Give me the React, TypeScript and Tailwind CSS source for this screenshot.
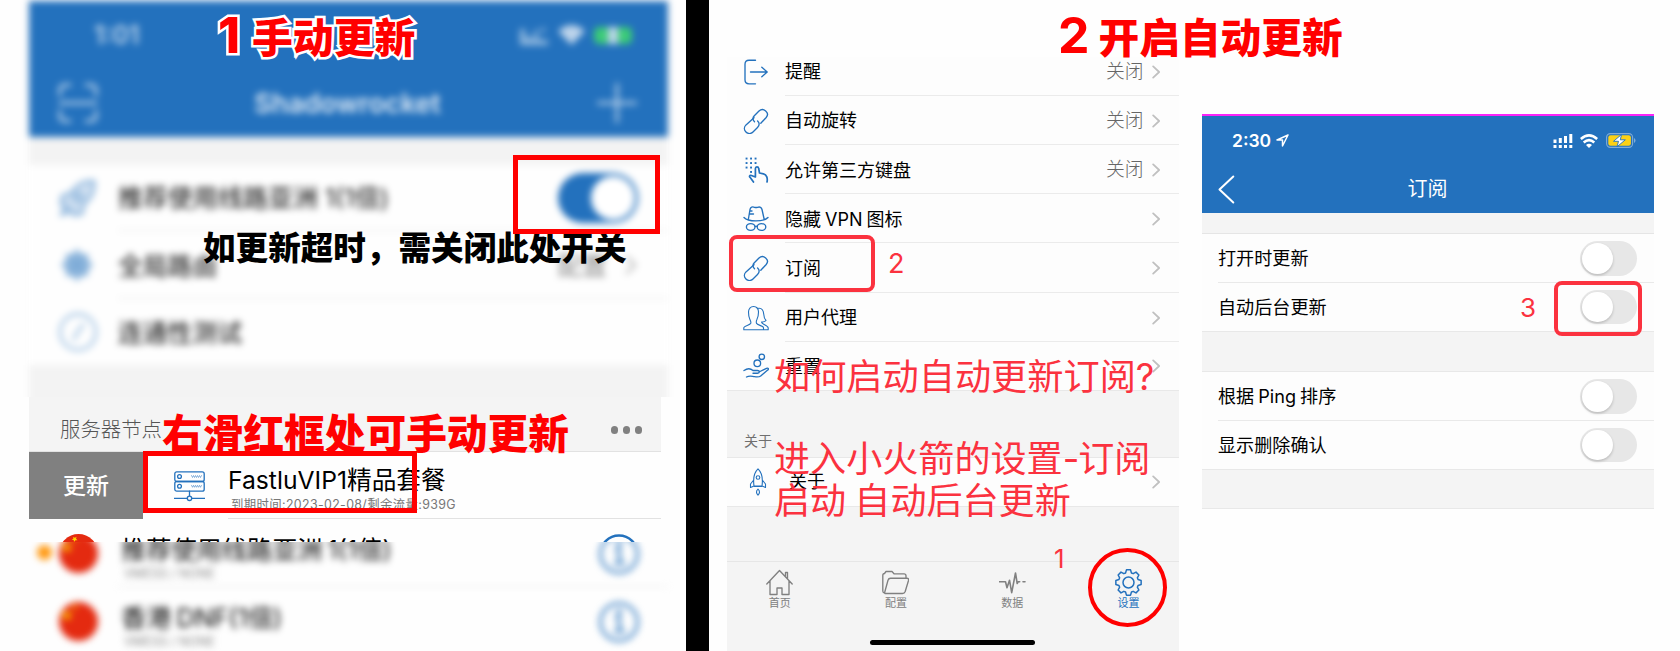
import React from "react";

const FONT = "font-['Inter','Noto_Sans_CJK_SC',sans-serif]";
const HEAVY = "font-['Noto_Sans_CJK_SC',sans-serif] font-black";

type IconProps = { className?: string; children: React.ReactNode; box?: string; sw?: number };
function Icon({ className = "", children, box = "0 0 26 26", sw = 1.35 }: IconProps) {
  return (
    <svg className={`block shrink-0 ${className}`} viewBox={box} fill="none" stroke="currentColor" strokeWidth={sw} strokeLinecap="round" strokeLinejoin="round">
      {children}
    </svg>
  );
}

function Chevron({ className = "" }: { className?: string }) {
  return (
    <Icon className={className} box="0 0 9 15" sw={1.9}>
      <path d="M1.2 1.5 7.6 7.5 1.2 13.5" />
    </Icon>
  );
}

const LogoutIcon = () => (
  <Icon className="size-[26px]">
    <path d="M12.500 1.200H6Q2 1.200 2 5.200V20.800Q2 24.800 6 24.800H12.500M7.500 13H24M18.800 8.200 24.200 13l-5.400 4.800" />
  </Icon>
);
const LinkIcon = () => (
  <Icon className="size-[26px]">
    <path d="M11.500 13.800c-2-1.900-2-4.200-.2-6l4.700-4.700c4.200-4.300 11.200 1.600 7.200 6.400l-5.400 5.700" />
    <path d="M11 9.800 3 16.900c-4.800 5 2.300 11.600 7 7.100l4.500-4.500c2.200-2.200 2.200-4.700.1-6.600" />
  </Icon>
);
const KeypadIcon = () => (
  <Icon className="size-[26px]">
    <g fill="currentColor" stroke="none">
      {[3.5, 8, 12.5].map((x) =>
        [1.5, 6, 10.5].map((y) => (x === 12.5 && y === 10.5 ? null : <rect key={`${x}-${y}`} x={x - 0.9} y={y - 0.9} width="1.9" height="1.9" />)),
      )}
      <rect x="7.100" y="14" width="1.900" height="1.900" />
    </g>
    <path strokeWidth="1.700" d="M24 25c.8-3.500-.2-7.500-3.500-8.200l-4-.8-.8-4.500c-.3-2.200-3.300-2.200-3.300 0V20l-4-1.500c-2-.3-2.500 1-1 2.200L10.500 25" />
  </Icon>
);
const SpyIcon = () => (
  <Icon className="size-[26px]">
    <path d="M5.500 12.500 7 3.500c.5-2.500 2.500-3 4.500-2.200 1 .3 2 .3 3 0 2.500-.8 4 0 4.500 2.200l2 9M1 11.500c4 4.500 20 4.500 24 0M6.500 8h4M7 5h2M12.200 20.500q1-.8 1.800 0" />
    <ellipse cx="7.700" cy="21" rx="4.300" ry="3.400" />
    <ellipse cx="18.500" cy="21" rx="4.300" ry="3.400" />
  </Icon>
);
const UsersIcon = () => (
  <Icon className="size-[26px]" sw={1.1}>
    <path d="M.8 24.800v-2c0-2 6.200-2.500 7-4.500.4-1.500-.3-2.500-1-4-.9-2-1.300-4-1.300-7.300 0-3.300 2-5.500 5-5.500s5 2.200 5 5.500c0 3.300-.6 5.500-1.500 7.300-.8 1.500-1 2.500-.5 4 .8 2 7 2.300 7 4.500v2zM15.500 3.300c3.500-.5 5 2.500 5.200 5.700.2 3 .8 5 2.300 6.500-1 1.500-3 1.500-4.500 1.500 0 2.500 6.700 3 6.700 6v1.800h-4.500" />
  </Icon>
);
const HandIcon = () => (
  <Icon className="size-[26px]">
    <circle cx="18.800" cy="3.800" r="2.700" />
    <circle cx="14.300" cy="10.300" r="3.300" />
    <path d="M1 17.500c4-2.800 7-1.800 9 0h4.500c2.500 0 2.500 2.700 0 2.700H10M17 18.500l6.500-3.200c2-.6 2.500.8 1.200 1.800l-7 5.800c-1.500 1.200-4 1.100-6 .8-3-.4-5-1.500-8.200.3" />
  </Icon>
);
const AboutIcon = () => (
  <Icon className="h-[28px] w-[18px]" box="0 0 18 28" sw={1.1}>
    <path d="M9 .8C4.500 5 4 11 5 18h8c1-7 .5-13-4-17.200zM4.700 12 1.500 16v3.500L5 18M13.300 12l3.200 4v3.500L13 18M5.500 18.500h7" />
    <circle cx="9" cy="9.500" r="1.800" />
    <path d="M9 21.200c-2.400 2.200-1.600 4.300 0 6 1.600-1.700 2.400-3.800 0-6z" />
  </Icon>
);

/* ---------- left phone ---------- */

function HomeTop() {
  return (
    <div className="flex flex-col bg-[#fefefe]">
      <header className="flex h-[136px] flex-col bg-[#2371bd] text-white">
        <div className="flex h-[68px] items-center justify-between pl-[65px] pr-[36px] opacity-70">
          <span className="pt-[2px] text-[25px] font-semibold">1:01</span>
          <div className="flex items-center gap-[9px]">
            <svg className="h-[19px] w-[30px]" viewBox="0 0 30 19" fill="white" opacity=".75">
              <path d="M1 3h5v11H1zM8 10h4v4H8zM15 8h4v6h-4zM22 2h4v4h-4zM15 4h4v3h-4zM1 14h28v5H1z" />
            </svg>
            <svg className="h-[20px] w-[27px]" viewBox="0 0 27 20" fill="white">
              <path d="M0 6Q13.500-6 27 6L13.500 20z" />
            </svg>
            <span className="flex h-[17px] w-[38px] justify-center rounded-[5px] bg-[#46f25c]">
              <span className="h-full w-[10px] bg-white" />
            </span>
          </div>
        </div>
        <div className="flex h-[68px] items-center justify-between pl-[29px] pr-[31px]">
          <Icon className="size-[40px] opacity-70" box="0 0 40 40" sw={3}>
            <path d="M2 12V7q0-5 5-5h5M28 2h5q5 0 5 5v5M38 28v5q0 5-5 5h-5M12 38H7q-5 0-5-5v-5M2 20h36" />
          </Icon>
          <span className="text-[26.800px] font-semibold opacity-85">Shadowrocket</span>
          <Icon className="size-[40px] opacity-80" box="0 0 40 40" sw={2.5}>
            <path d="M20 1v38M1 20h38" />
          </Icon>
        </div>
      </header>
      <div className="h-[28px] bg-[#f3f3f3]" />
      <div className="flex h-[65px] items-center pl-[29px] pr-[30px] text-[25px]">
        <Icon className="size-[38px] text-[#2371bd] opacity-60" box="0 0 38 38" sw={2.5}>
          <path fill="currentColor" fillOpacity=".35" d="M36 2c-12 0-18 4-23 12l-9 3-1 9 6 1-6 9 11-5 1 5 9-1 2-10C34 19 37 12 36 2z" />
          <circle cx="20" cy="18" r="4" />
        </Icon>
        <span className="ml-[22px] mt-[3px] grow font-medium text-[#333]">推荐使用线路亚洲 1(1倍)</span>
        <span className="flex h-[50px] w-[80px] items-center justify-end rounded-full bg-[#2371bd] pr-[3px]">
          <span className="size-[44px] rounded-full bg-white" />
        </span>
      </div>
      <div className="ml-[89px] h-px bg-[#e4e4e4]" />
      <div className="flex h-[67px] items-center pl-[29px] pr-[31px] text-[24.800px]">
        <Icon className="size-[38px] text-[#2371bd] opacity-60" box="0 0 38 38" sw={2.5}>
          <circle cx="19" cy="19" r="13" fill="currentColor" stroke="none" opacity=".8" />
          <path d="M19 4v30M4 19h30M9 9l20 20M29 9 9 29" />
        </Icon>
        <span className="ml-[22px] mt-[4px] grow font-medium text-[#333]">全局路由</span>
        <span className="mr-[18px] mt-[4px] text-[#888]">配置</span>
        <Chevron className="h-[20px] w-[12px] text-[#bbb]" />
      </div>
      <div className="ml-[89px] h-px bg-[#e4e4e4]" />
      <div className="flex h-[66px] items-center pl-[29px] text-[24.800px]">
        <Icon className="size-[40px] text-[#2371bd] opacity-45" box="0 0 38 38" sw={2.5}>
          <circle cx="19" cy="19" r="17" />
          <path d="M24 12l-6 8-3 6" />
        </Icon>
        <span className="ml-[20px] mt-[3px] font-medium text-[#333]">连通性测试</span>
      </div>
      <div className="h-[60px] bg-[#f3f3f3]" />
    </div>
  );
}

function NodeRow({ name, active }: { name: string; active?: boolean }) {
  return (
    <div className="flex h-[67px] items-center">
      <span className={`ml-[8px] size-[15px] rounded-full ${active ? "bg-[#ff9a14]" : ""}`} />
      <svg className="ml-[7px] mt-[2px] size-[39px]" viewBox="0 0 39 39">
        <circle cx="19.500" cy="19.500" r="19.500" fill="#e42a10" />
        <path fill="#ffd500" d="m8 8 1.500 3.500 4 .3-3 2.500 1 4L8 16l-3.500 2.200 1-4-3-2.500 4-.3zM14 3l2 .8 1.500-1-.5 2 1.500 1.400h-2L15 8l-.3-2-1.900-.6 1.700-.8z" />
      </svg>
      <div className="ml-[23px] flex grow flex-col pt-[11px]">
        <span className="text-[25.200px] leading-[30px] text-black [word-spacing:-2px]">{name}</span>
        <span className="ml-[3px] mt-[1px] text-[12.500px] leading-[16px] text-[#888]">VMESS / NONE</span>
      </div>
      <Icon className="mr-[29px] mt-[3px] size-[40px] text-[#2371bd]" box="0 0 40 40" sw={2.5}>
        <circle cx="20" cy="20" r="18.500" />
        <path d="M17 17h3.500v12M16 29h9" />
        <circle cx="20" cy="11" r="1.500" fill="currentColor" />
      </Icon>
    </div>
  );
}

function NodeList() {
  return (
    <div className="flex w-[639px] flex-col">
      <NodeRow name="推荐使用线路亚洲 1(1倍)" active />
      <div className="ml-[89px] h-px bg-[#e8e8e8]" />
      <NodeRow name="香港 DNF(1倍)" />
    </div>
  );
}

function LeftPhone() {
  return (
    <section className="relative flex w-[686px] shrink-0 flex-col bg-[#fefefe]">
      <div className="h-[397px] overflow-hidden">
        <div className="ml-[29px] w-[639px] pt-px blur-[3.500px]">
          <HomeTop />
        </div>
      </div>
      <div className="ml-[29px] flex h-[54px] w-[632px] items-center justify-between bg-[#f4f4f4] pl-[31px] pr-[19px] pt-[12px]">
        <span className="text-[20.400px] font-light text-[#555]">服务器节点</span>
        <div className="flex gap-[4.500px]">
          <span className="size-[7.500px] rounded-full bg-[#808080]" />
          <span className="size-[7.500px] rounded-full bg-[#808080]" />
          <span className="size-[7.500px] rounded-full bg-[#808080]" />
        </div>
      </div>
      <div className="ml-[29px] flex h-[68px] w-[632px] border-t border-[#e2e2e2]">
        <div className="flex w-[114px] items-center justify-center bg-[#808080] pt-[2px] text-[23px] font-medium text-white">更新</div>
        <Icon className="ml-[31px] mt-[19px] h-[31px] w-[31px] text-[#2371bd]" box="0 0 31 31" sw={1.3}>
          <rect x=".8" y=".8" width="29.400" height="9.700" rx="2" />
          <rect x=".8" y="10.500" width="29.400" height="9.700" rx="2" />
          <circle cx="5.500" cy="5.500" r="1.900" />
          <circle cx="5.500" cy="15.300" r="1.900" />
          <path d="M15.500 20.200v4.500M.5 27.300h13M17.800 27.300h12.700" />
          <circle cx="15.500" cy="27.300" r="2.200" />
          <path strokeWidth=".7" opacity=".7" d="m17.500 4.500 1 2 1-2 1 2 1-2 1 2 1-2 1 2 1-2 1 2 1-2M17.500 14.300l1 2 1-2 1 2 1-2 1 2 1-2 1 2 1-2 1 2 1-2" />
        </Icon>
        <div className="ml-[23px] flex grow flex-col border-b border-[#e2e2e2] pt-[12px]">
          <span className="whitespace-nowrap text-[24.700px] leading-[32px] text-black">FastluVIP1精品套餐</span>
          <span className="ml-[3px] mt-[1px] whitespace-nowrap text-[12.400px] leading-[16px] tracking-[0.36px] text-[#777]">到期时间:2023-02-08/剩余流量:939G</span>
        </div>
      </div>
      <div className="ml-[29px] h-[23px] overflow-hidden">
        <NodeList />
      </div>
      <div className="h-[109px] overflow-hidden pl-[29px]">
        <div className="-mt-[23px] blur-[3.500px]">
          <NodeList />
        </div>
      </div>

      <div className={`absolute left-[218px] top-[5px] flex items-baseline whitespace-nowrap leading-[60px] text-[#f00] [paint-order:stroke_fill] [-webkit-text-stroke:5px_white] ${HEAVY}`}>
        <span className="font-['Inter'] text-[50px] font-extrabold">1</span>
        <span className="ml-[12px] text-[40.800px]">手动更新</span>
      </div>
      <div className={`absolute left-[203px] top-[226px] whitespace-nowrap text-[32.600px] leading-[40px] text-black ${HEAVY}`}>如更新超时，需关闭此处开关</div>
      <div className={`absolute left-[162px] top-[407px] whitespace-nowrap text-[40.700px] leading-[50px] text-[#f00] ${HEAVY}`}>右滑红框处可手动更新</div>
      <div className="absolute left-[513px] top-[155px] h-[79px] w-[147px] border-[5px] border-[#f00]" />
      <div className="absolute left-[143px] top-[451px] h-[62px] w-[274px] border-[5px] border-[#f00]" />
    </section>
  );
}

/* ---------- settings phone ---------- */

function SettingRow({ icon, label, value, last }: { icon: React.ReactNode; label: string; value?: string; last?: boolean }) {
  return (
    <div className={`flex pl-[16px] ${last ? "h-[48.200px]" : "h-[49.200px]"}`}>
      <div className="flex w-[26px] items-center justify-center pt-[1px] text-[#2371bd]">{icon}</div>
      <div className={`ml-[16px] flex grow items-center border-b pr-[19px] pt-[2px] ${last ? "border-transparent" : "border-[#ebebeb]"}`}>
        <span className="grow whitespace-nowrap text-[18px] text-black [word-spacing:-1px]">{label}</span>
        {value && <span className="mr-[8px] pt-[1px] text-[18.800px] font-light text-[#666]">{value}</span>}
        <Chevron className="h-[14px] w-[8.500px] text-[#c0c0c0]" />
      </div>
    </div>
  );
}

function Tab({ icon, label, active }: { icon: React.ReactNode; label: string; active?: boolean }) {
  return (
    <div className={`flex w-[116.300px] flex-col items-center ${active ? "text-[#2371bd]" : "text-[#808080]"}`}>
      {icon}
      <span className="text-[11px] leading-[14px]">{label}</span>
    </div>
  );
}

const GEAR = (() => {
  const pts: string[] = [];
  const n = 8;
  for (let i = 0; i < n; i++) {
    const c = (i * 2 * Math.PI) / n;
    [[-0.3, 10], [-0.16, 12.8], [0.16, 12.8], [0.3, 10]].forEach(([a, r]) => {
      pts.push(`${(13.5 + r * Math.sin(c + a)).toFixed(2)} ${(13.5 - r * Math.cos(c + a)).toFixed(2)}`);
    });
  }
  return `M${pts.join("L")}Z`;
})();

function SettingsPhone() {
  return (
    <section className="mt-[57px] flex h-[594px] w-[452px] shrink-0 flex-col overflow-hidden bg-[#f4f4f4]">
      <div className="-mt-[10.400px] flex flex-col border-b border-[#e8e8e8] bg-[#fdfdfd]">
        <SettingRow icon={<LogoutIcon />} label="提醒" value="关闭" />
        <SettingRow icon={<LinkIcon />} label="自动旋转" value="关闭" />
        <SettingRow icon={<KeypadIcon />} label="允许第三方键盘" value="关闭" />
        <SettingRow icon={<SpyIcon />} label="隐藏 VPN 图标" />
        <SettingRow icon={<LinkIcon />} label="订阅" />
        <SettingRow icon={<UsersIcon />} label="用户代理" />
        <SettingRow icon={<HandIcon />} label="重置" last />
      </div>
      <div className="flex h-[67px] items-end border-b border-[#e8e8e8] pb-[6px] pl-[17px] text-[14px] leading-[20px] text-[#6f6f6f]">关于</div>
      <div className="border-b border-[#e8e8e8] bg-[#fdfdfd]">
        <div className="flex h-[48px] items-center pl-[22px] pr-[19px]">
          <span className="text-[#2371bd]"><AboutIcon /></span>
          <span className="ml-[22px] grow text-[18px] text-black">关于</span>
          <Chevron className="h-[14px] w-[8.500px] text-[#c0c0c0]" />
        </div>
      </div>
      <div className="h-[54px]" />
      <nav className="flex border-t border-[#e6e6e6] pt-[7.500px]">
        <div className="-ml-[5.500px] flex">
          <Tab label="首页" icon={<Icon className="size-[27px]" box="0 0 27 27"><path d="M.8 15 13.500 1.500 26.200 15M4 12v13.500h7v-6.500h5v6.500h7V12M19.500 7.500V3.500h2v6" /></Icon>} />
          <Tab label="配置" icon={<Icon className="size-[27px]" box="0 0 27 27"><path d="M3 24.500h17.500c1.500 0 2.300-.8 2.700-2l3.300-11c.4-1.600-.3-2.300-1.600-2.300H8.500c-1.500 0-2.100.7-2.500 2L2.500 24Q.8 23.800.8 22V6.500C.8 5 1.500 4.500 2.500 4.500L4 2.500h6l2 2.300h10c1.500 0 2 .7 2 2v2.400" /></Icon>} />
          <Tab label="数据" icon={<Icon className="size-[27px]" box="0 0 27 27" sw={1.6}><path d="M.5 12.700h6l1.500 6 2.500-7.500 2.200 12.500L16.500 4l1.700 10.500 1-1.800h1.500M24 12.700h2" /></Icon>} />
          <Tab active label="设置" icon={<Icon className="size-[27px]" box="0 0 27 27" sw={1.5}><path d={GEAR} /><circle cx="13.500" cy="13.500" r="5.500" /></Icon>} />
        </div>
      </nav>
      <div className="ml-[143px] mt-[29.500px] h-[5.500px] w-[165px] shrink-0 rounded-full bg-black" />
    </section>
  );
}

/* ---------- subscription phone ---------- */

function ToggleRow({ label, divider }: { label: string; divider?: boolean }) {
  return (
    <div className={`ml-[16px] flex h-[49px] items-center justify-between pr-[17px] ${divider ? "border-b border-[#e9e9e9] pt-[1px]" : "pb-[1px]"}`}>
      <span className="whitespace-nowrap pt-[1px] text-[18.100px] text-black [word-spacing:-1px]">{label}</span>
      <span className="flex h-[34.500px] w-[57px] items-center rounded-full bg-[#e7e7e7] pl-[2px]">
        <span className="size-[30.500px] rounded-full bg-white shadow-[0_1.500px_3px_rgba(0,0,0,0.2)]" />
      </span>
    </div>
  );
}

function SubscribePhone() {
  return (
    <section className="ml-[23px] mt-[114px] flex w-[452px] shrink-0 flex-col self-start">
      <div className="h-[2px] bg-[#fb24f8]" />
      <header className="flex h-[97px] flex-col bg-[#2371bd] text-white">
        <div className="flex h-[49px] items-center pl-[30px] pr-[18px]">
          <span className="pt-[1px] text-[17.500px] font-semibold">2:30</span>
          <Icon className="ml-[5px] size-[13px]" box="0 0 13 13" sw={1.5}><path d="M12 1 1 6h5.500v6z" /></Icon>
          <div className="ml-auto flex items-center">
            <svg className="h-[14px] w-[20px]" viewBox="0 0 20 14" fill="white">
              <path d="M.5 5.500h3V9h-3zM5.800 4h3v5h-3zM11 2h3v7h-3zM16.300 0h3v9h-3zM.5 11h3v3h-3zM5.800 11h3v3h-3zM11 11h3v3h-3zM16.300 11h3v3h-3z" />
            </svg>
            <svg className="ml-[7px] h-[14px] w-[18px]" viewBox="0 0 18 14" fill="none" stroke="white" strokeWidth="2.600">
              <path d="M.8 5q8.200-7.200 16.400 0M3.700 8.400q5.300-4.400 10.600 0" />
              <path d="M6 11q3-2.400 6 0L9 14z" fill="white" stroke="none" />
            </svg>
            <svg className="ml-[8px] h-[15px] w-[30px]" viewBox="0 0 30 15">
              <rect x=".6" y=".6" width="26" height="13.800" rx="3.800" fill="none" stroke="#7fabd8" strokeWidth="1.100" />
              <path d="M28 5v5q1.500-.7 1.500-2.500T28 5z" fill="#7fabd8" />
              <rect x="2.300" y="2.300" width="22.600" height="10.400" rx="2.300" fill="#fcd116" />
              <path d="M15.500 1.500 7.500 8.300h5l-1.500 5.500 8.300-7h-5z" fill="white" stroke="#2371bd" strokeWidth=".9" />
            </svg>
          </div>
        </div>
        <div className="flex h-[48px] items-center px-[16px]">
          <Icon className="h-[29px] w-[17px]" box="0 0 17 29" sw={2}><path d="M15.300 1.500 1.500 14.500 15.300 27.500" /></Icon>
          <span className="grow pr-[18px] text-center text-[20px]">订阅</span>
        </div>
      </header>
      <div className="h-[21px] border-b border-[#e5e5e5] bg-[#f4f4f4]" />
      <div className="bg-[#fdfdfd]">
        <ToggleRow label="打开时更新" divider />
        <ToggleRow label="自动后台更新" />
      </div>
      <div className="-mt-px h-[41px] border-y border-[#e8e8e8] bg-[#f4f4f4]" />
      <div className="bg-[#fdfdfd]">
        <ToggleRow label="根据 Ping 排序" divider />
        <ToggleRow label="显示删除确认" />
      </div>
      <div className="-mt-px h-[40px] border-y border-[#e8e8e8] bg-[#f4f4f4]" />
    </section>
  );
}

export default function App() {
  return (
    <div className={`relative flex h-[651px] w-[1680px] overflow-hidden bg-white ${FONT}`}>
      <LeftPhone />
      <div className="w-[23px] shrink-0 bg-black" />
      <div className="flex grow bg-[#fefefe] pl-[18px]">
        <SettingsPhone />
        <SubscribePhone />
      </div>

      <div className={`absolute left-[1058px] top-[5px] flex items-baseline whitespace-nowrap leading-[60px] text-[#f00] ${HEAVY}`}>
        <span className="font-['Inter'] text-[50px] font-bold">2</span>
        <span className="ml-[9px] text-[40.700px]">开启自动更新</span>
      </div>
      <div className="absolute left-[729px] top-[235px] h-[57px] w-[146px] rounded-[8px] border-[4px] border-[#fb323f]" />
      <div className="absolute left-[888px] top-[248px] text-[27px] leading-[32px] text-[#fb323f]">2</div>
      <div className="absolute left-[1054px] top-[543px] text-[26px] leading-[32px] text-[#fb323f]">1</div>
      <div className="absolute left-[1520px] top-[292px] text-[26px] leading-[32px] text-[#fb323f]">3</div>
      <div className="absolute left-[1554px] top-[281px] h-[55px] w-[88px] rounded-[8px] border-[4px] border-[#fb323f]" />
      <div className="absolute left-[774px] top-[356px] whitespace-nowrap text-[36.200px] leading-[42px] text-[#fb323f]">如何启动自动更新订阅?</div>
      <div className="absolute left-[774px] top-[438px] whitespace-nowrap text-[36.100px] leading-[42px] text-[#fb323f] [word-spacing:-2px]">
        进入小火箭的设置<span className="tracking-[-1px]">-</span>订阅<br />启动 自动后台更新
      </div>
      <div className="absolute left-[1088px] top-[548px] size-[79px] rounded-full border-[4px] border-[#f00]" />
    </div>
  );
}
